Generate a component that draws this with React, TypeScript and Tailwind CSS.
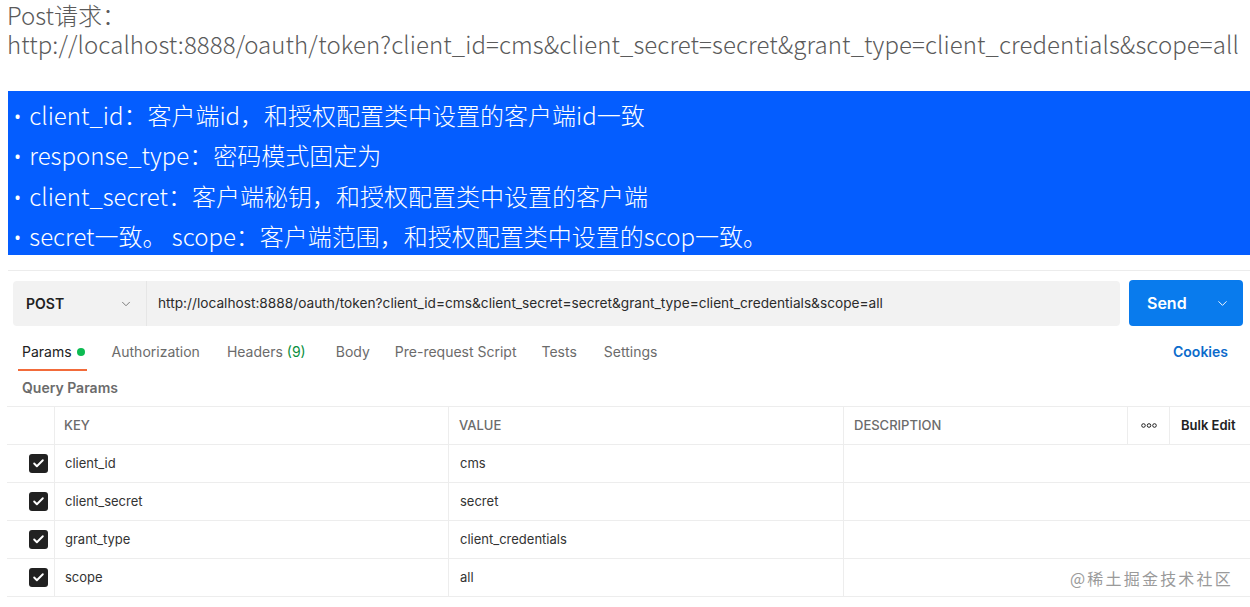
import { ChevronDown, Check } from "lucide-react";

const cjk = { fontFamily: '"Noto Sans CJK SC", "Noto Sans", sans-serif' };
const ui = { fontFamily: 'Inter, "Liberation Sans", sans-serif' };

const bullets = [
  "client_id：客户端id，和授权配置类中设置的客户端id一致",
  "response_type：密码模式固定为",
  "client_secret：客户端秘钥，和授权配置类中设置的客户端",
  "secret一致。 scope：客户端范围，和授权配置类中设置的scop一致。",
];

const params = [
  { key: "client_id", value: "cms" },
  { key: "client_secret", value: "secret" },
  { key: "grant_type", value: "client_credentials" },
  { key: "scope", value: "all" },
];

const tabs = [
  { label: "Authorization", gap: "ml-[27px]" },
  { label: "Headers", gap: "ml-[27px]" },
  { label: "Body", gap: "ml-[30px]" },
  { label: "Pre-request Script", gap: "ml-[25px]" },
  { label: "Tests", gap: "ml-[25px]" },
  { label: "Settings", gap: "ml-[27px]" },
];

const url =
  "http://localhost:8888/oauth/token?client_id=cms&client_secret=secret&grant_type=client_credentials&scope=all";

export default function App() {
  return (
    <div className="w-[1250px] h-[607px] bg-white overflow-hidden relative">
      {/* Texto superior */}
      <div style={cjk} className="pl-[7px] text-[24px] leading-[29px] font-light text-[#5a5a5a]">
        <div>Post请求：</div>
        <div className="tracking-[0.09px]">{url}</div>
      </div>

      {/* Caja azul */}
      <div style={cjk} className="ml-[8px] mt-[33px] h-[164px] bg-[#045dff] pl-[5px] pt-[4px] text-white text-[24px] font-light leading-[39.4px]">
        {bullets.map((b) => (
          <div key={b}>
            <span style={{ fontFamily: '"Noto Sans", sans-serif' }} className="mr-[2px]">•</span> {b}
          </div>
        ))}
      </div>

      <div className="ml-[8px] mt-[15px] border-t border-[#ececec]" />

      {/* Postman */}
      <div style={ui} className="pl-[13px] pr-[7px]">
        <div className="flex gap-[9px] mt-[10px]">
          <div className="flex-1 h-[45px] bg-[#f2f2f2] rounded-[4px] flex items-center">
            <div className="w-[134px] h-full flex items-center justify-between pl-[13px] pr-[13px] border-r border-[#e6e6e6]">
              <span className="text-[14px] font-semibold text-[#212121]">POST</span>
              <ChevronDown size={14} strokeWidth={1.5} className="text-[#6b6b6b]" />
            </div>
            <span className="pl-[11px] text-[13.7px] text-[#2b2b2b]">{url}</span>
          </div>
          <div className="w-[114px] h-[46px] -mt-[1px] bg-[#097bed] rounded-[4px] flex items-center justify-between pl-[18px] pr-[13px] text-white">
            <span className="text-[16px] font-semibold">Send</span>
            <ChevronDown size={15} strokeWidth={1.5} />
          </div>
        </div>

        {/* Pestañas */}
        <div className="flex items-start mt-[15px] pl-[9px] text-[14px] text-[#6b6b6b] h-[30px]">
          <div className="relative flex items-center gap-[5px] text-[#212121] pb-[8px]">
            <span>Params</span>
            <span className="w-[8px] h-[8px] rounded-full bg-[#0cbb52]" />
            <span className="absolute left-[-4px] right-[-2px] bottom-[-1px] h-[2px] bg-[#f26b3a]" />
          </div>
          <div className="flex">
            {tabs.map((t) => (
              <span key={t.label} className={t.gap}>
                {t.label}
                {t.label === "Headers" && <span className="text-[#0a8f3e]"> (9)</span>}
              </span>
            ))}
          </div>
          <span className="ml-auto mr-[15px] text-[#0b6bcb] font-semibold">Cookies</span>
        </div>

        <div className="pl-[9px] mt-[6px] text-[14px] font-semibold text-[#6b6b6b] h-[29px]">Query Params</div>
      </div>

      {/* Tabla */}
      <div style={ui} className="ml-[7px] text-[13px]">
        <div className="flex h-[39px] border-t border-b border-[#ededed] items-center text-[#6b6b6b] font-medium">
          <div className="w-[48px] h-full border-r border-[#ededed]" />
          <div className="w-[394px] h-full flex items-center pl-[9px] border-r border-[#ededed]">KEY</div>
          <div className="w-[395px] h-full flex items-center pl-[10px] border-r border-[#ededed]">VALUE</div>
          <div className="w-[284px] h-full flex items-center pl-[10px] border-r border-[#ededed]">DESCRIPTION</div>
          <div className="w-[42px] h-full flex items-center justify-center border-r border-[#ededed]">
            <svg width="16" height="5" viewBox="0 0 16 5" fill="none" stroke="#212121" strokeWidth="1">
              <circle cx="2.5" cy="2.5" r="1.8" />
              <circle cx="8" cy="2.5" r="1.8" />
              <circle cx="13.5" cy="2.5" r="1.8" />
            </svg>
          </div>
          <div className="flex-1 h-full flex items-center pl-[11px] text-[#212121] font-semibold">Bulk Edit</div>
        </div>
        {params.map((p) => (
          <div key={p.key} className="flex h-[38px] border-b border-[#ededed] items-center text-[#333]">
            <div className="w-[48px] h-full border-r border-[#ededed] flex items-center justify-center pl-[16px]">
              <span className="w-[19px] h-[19px] rounded-[3px] bg-[#212121] flex items-center justify-center">
                <Check size={13} strokeWidth={3.5} className="text-white" />
              </span>
            </div>
            <div className="w-[394px] h-full flex items-center pl-[10px] border-r border-[#ededed]">{p.key}</div>
            <div className="w-[395px] h-full flex items-center pl-[11px] border-r border-[#ededed]">{p.value}</div>
            <div className="flex-1 h-full" />
          </div>
        ))}
      </div>

      {/* Marca de agua */}
      <div style={cjk} className="absolute left-[1070px] top-[566px] text-[16px] text-[#9a9a9a] tracking-[2.2px]">
        @稀土掘金技术社区
      </div>
    </div>
  );
}
